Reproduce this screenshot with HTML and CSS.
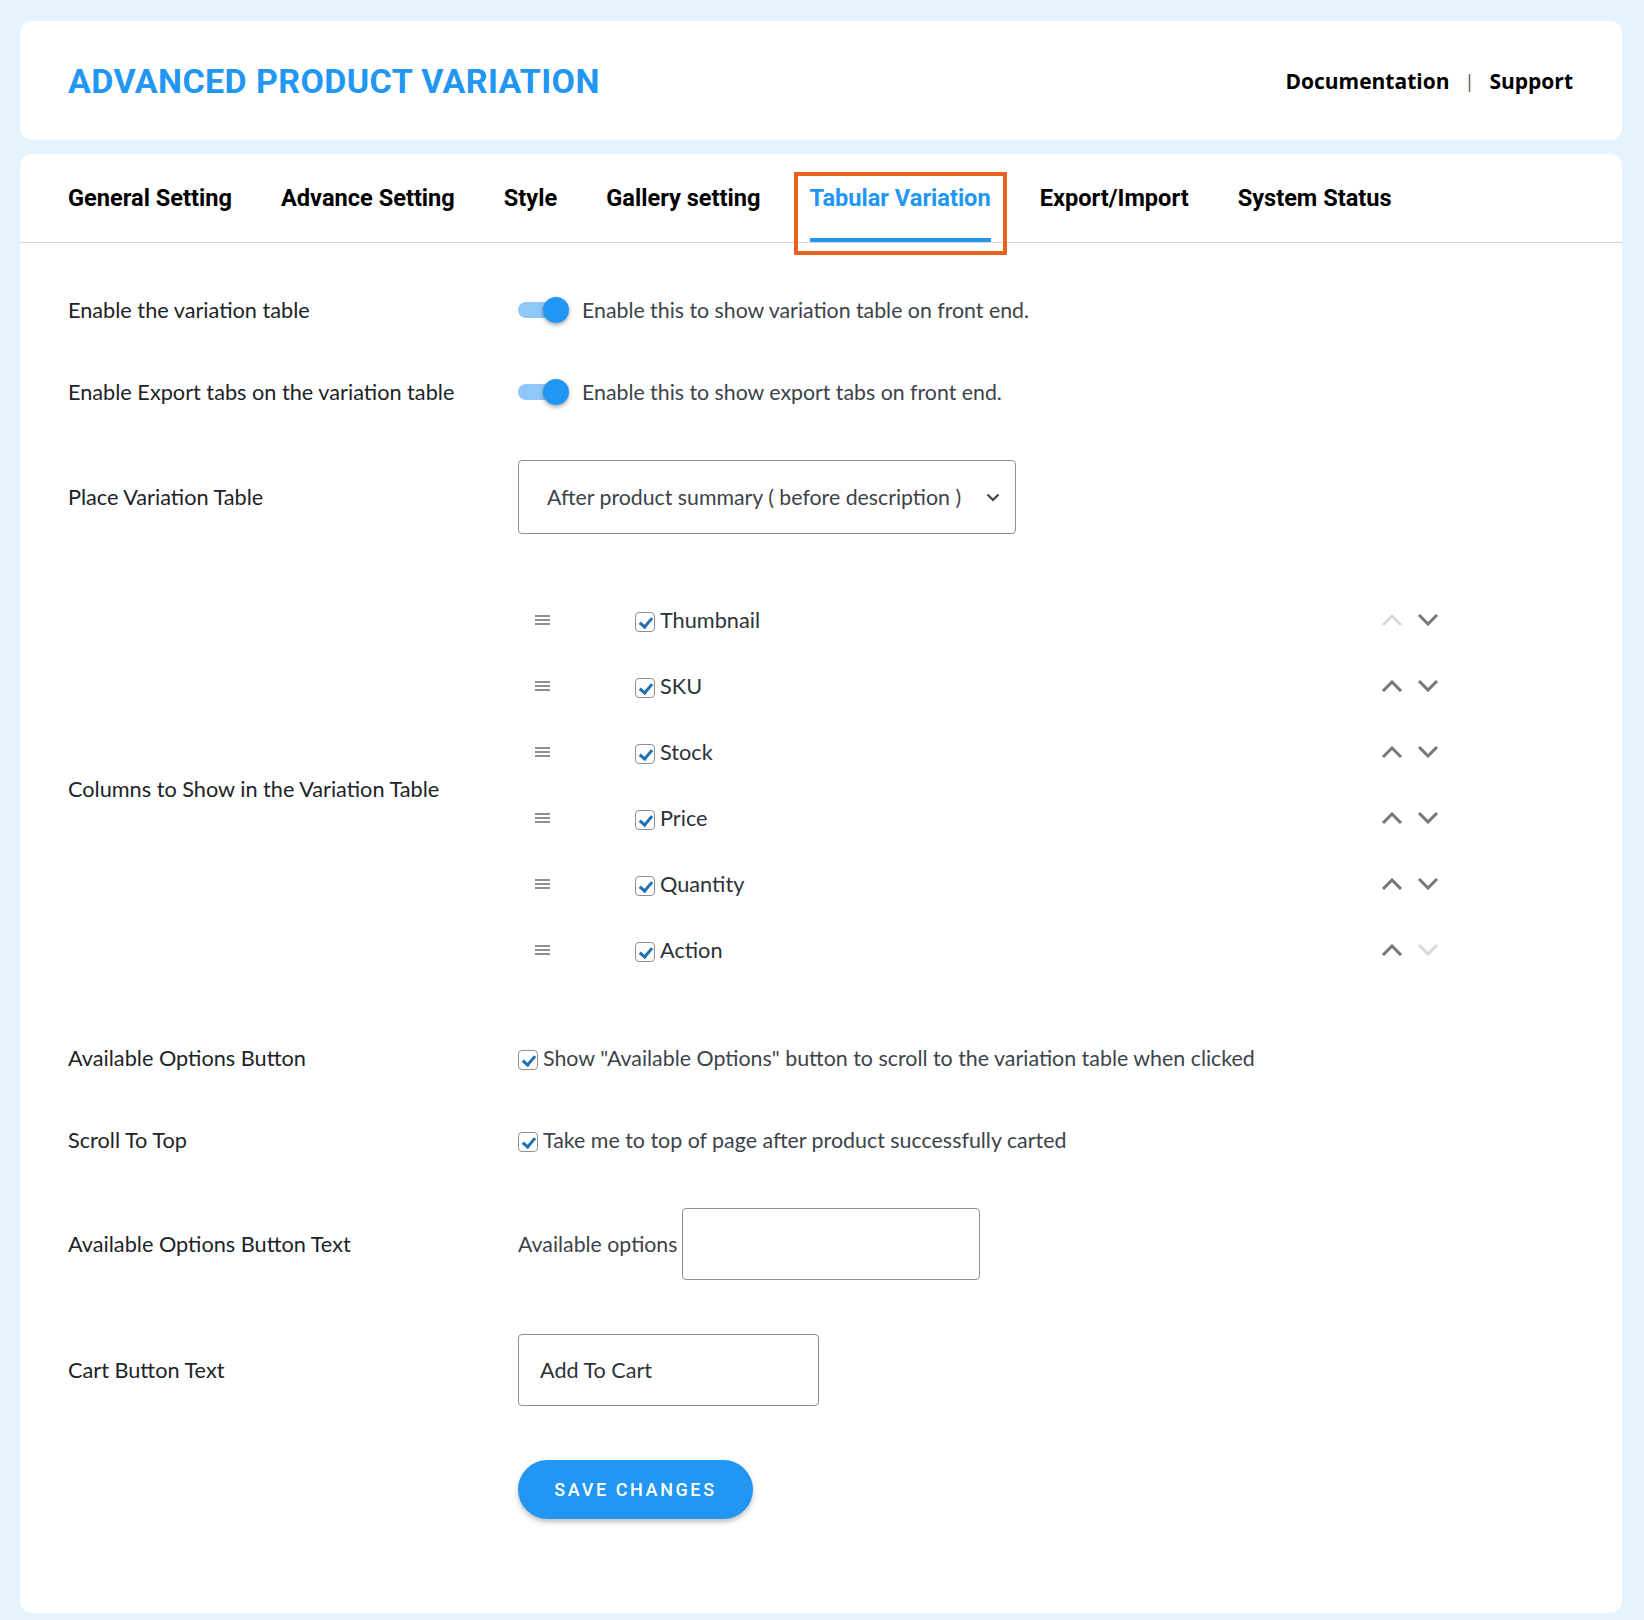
FILE: index.html
```html
<!DOCTYPE html>
<html lang="en">
<head>
    <meta charset="UTF-8">
    <meta name="viewport" content="width=device-width, initial-scale=1.0">
    <title>Advanced Product Variation</title>
    <link rel="stylesheet" href="styles.css">
</head>
<body>
    <div class="page">
        <header class="card topbar">
            <h1 class="brand">ADVANCED PRODUCT VARIATION</h1>
            <nav class="links">
                <a href="#">Documentation</a>
                <span class="sep">|</span>
                <a href="#">Support</a>
            </nav>
        </header>

        <main class="card settings">
            <nav class="tabs">
                <a class="tab" href="#">General Setting</a>
                <a class="tab" href="#">Advance Setting</a>
                <a class="tab" href="#">Style</a>
                <a class="tab" href="#">Gallery setting</a>
                <a class="tab active" href="#">Tabular Variation</a>
                <a class="tab" href="#">Export/Import</a>
                <a class="tab" href="#">System Status</a>
            </nav>

            <form class="form" onsubmit="return false">
                <div class="label">Enable the variation table</div>
                <div class="field">
                    <label class="switch"><input type="checkbox" checked><span class="track"></span></label>
                    <span class="desc">Enable this to show variation table on front end.</span>
                </div>

                <div class="label">Enable Export tabs on the variation table</div>
                <div class="field">
                    <label class="switch"><input type="checkbox" checked><span class="track"></span></label>
                    <span class="desc">Enable this to show export tabs on front end.</span>
                </div>

                <div class="label">Place Variation Table</div>
                <div class="field">
                    <div class="select">
                        <span>After product summary ( before description )</span>
                        <svg class="caret" width="14" height="9" viewBox="0 0 14 9"><path d="M1.5 1.5l5.5 5.5 5.5-5.5" fill="none" stroke="#3c434a" stroke-width="2.2"/></svg>
                    </div>
                </div>

                <div class="label">Columns to Show in the Variation Table</div>
                <div class="field">
                    <ul class="columns">
                        <li class="column">
                            <span class="handle"></span>
                            <label class="check"><span class="box"></span>Thumbnail</label>
                            <span class="order">
                                <svg class="arrow off" viewBox="0 0 22 12"><path d="M2 11L11 2l9 9"/></svg>
                                <svg class="arrow" viewBox="0 0 22 12"><path d="M2 1l9 9 9-9"/></svg>
                            </span>
                        </li>
                        <li class="column">
                            <span class="handle"></span>
                            <label class="check"><span class="box"></span>SKU</label>
                            <span class="order">
                                <svg class="arrow" viewBox="0 0 22 12"><path d="M2 11L11 2l9 9"/></svg>
                                <svg class="arrow" viewBox="0 0 22 12"><path d="M2 1l9 9 9-9"/></svg>
                            </span>
                        </li>
                        <li class="column">
                            <span class="handle"></span>
                            <label class="check"><span class="box"></span>Stock</label>
                            <span class="order">
                                <svg class="arrow" viewBox="0 0 22 12"><path d="M2 11L11 2l9 9"/></svg>
                                <svg class="arrow" viewBox="0 0 22 12"><path d="M2 1l9 9 9-9"/></svg>
                            </span>
                        </li>
                        <li class="column">
                            <span class="handle"></span>
                            <label class="check"><span class="box"></span>Price</label>
                            <span class="order">
                                <svg class="arrow" viewBox="0 0 22 12"><path d="M2 11L11 2l9 9"/></svg>
                                <svg class="arrow" viewBox="0 0 22 12"><path d="M2 1l9 9 9-9"/></svg>
                            </span>
                        </li>
                        <li class="column">
                            <span class="handle"></span>
                            <label class="check"><span class="box"></span>Quantity</label>
                            <span class="order">
                                <svg class="arrow" viewBox="0 0 22 12"><path d="M2 11L11 2l9 9"/></svg>
                                <svg class="arrow" viewBox="0 0 22 12"><path d="M2 1l9 9 9-9"/></svg>
                            </span>
                        </li>
                        <li class="column">
                            <span class="handle"></span>
                            <label class="check"><span class="box"></span>Action</label>
                            <span class="order">
                                <svg class="arrow" viewBox="0 0 22 12"><path d="M2 11L11 2l9 9"/></svg>
                                <svg class="arrow off" viewBox="0 0 22 12"><path d="M2 1l9 9 9-9"/></svg>
                            </span>
                        </li>
                    </ul>
                </div>

                <div class="label">Available Options Button</div>
                <div class="field">
                    <label class="check desc"><span class="box"></span>Show "Available Options" button to scroll to the variation table when clicked</label>
                </div>

                <div class="label">Scroll To Top</div>
                <div class="field">
                    <label class="check desc"><span class="box"></span>Take me to top of page after product successfully carted</label>
                </div>

                <div class="label">Available Options Button Text</div>
                <div class="field">
                    <span class="desc">Available options</span>
                    <input class="text short" type="text">
                </div>

                <div class="label">Cart Button Text</div>
                <div class="field">
                    <input class="text" type="text" value="Add To Cart">
                </div>

                <div class="label"></div>
                <div class="field">
                    <button class="save" type="submit">SAVE CHANGES</button>
                </div>
            </form>
        </main>
    </div>
</body>
</html>
```

FILE: styles.css
```css
/* page */
body {
    margin: 0;
    background-color: #e5f3fe;
    font-family: "Lato", "Noto Sans", sans-serif;
    color: #1d2327;
}

.page {
    padding: 21px 22px 7px 20px;
    display: flex;
    flex-direction: column;
    gap: 14px;
}

.card {
    background-color: white;
    border-radius: 12px;
}

/* header */
.topbar {
    height: 119px;
    padding: 0 49px 0 48px;
    display: flex;
    align-items: center;
    justify-content: space-between;
}

.brand {
    margin: 0;
    font-family: "Roboto", sans-serif;
    font-weight: 700;
    font-size: 34px;
    letter-spacing: 0.4px;
    color: #2196f3;
}

.links {
    display: flex;
    align-items: center;
    gap: 15px;
    font-family: "Open Sans", sans-serif;
    font-size: 21px;
    font-weight: 700;
}

.links a {
    color: #000;
    text-decoration: none;
}

.links .sep {
    font-weight: 400;
    color: #555;
    font-size: 18px;
}

/* tabs */
.settings {
    height: 1459px;
    box-sizing: border-box;
}

.tabs {
    display: flex;
    gap: 49px;
    padding: 0 48px;
    height: 89px;
    border-bottom: 1px solid #d6d6d6;
    box-sizing: border-box;
}

.tab {
    position: relative;
    display: flex;
    align-items: center;
    padding-top: 4px;
    height: 88px;
    box-sizing: border-box;
    border-bottom: 4px solid transparent;
    font-family: "Roboto", sans-serif;
    font-weight: 700;
    font-size: 23.6px;
    color: #000;
    text-decoration: none;
}

.tab.active {
    color: #2196f3;
    border-bottom-color: #2196f3;
}

/* highlight box drawn around the active tab */
.tab.active::after {
    content: "";
    position: absolute;
    top: 18px;
    bottom: -17px;
    left: -16px;
    right: -16px;
    border: 4px solid #e8611f;
}

/* form */
.form {
    display: grid;
    grid-template-columns: 450px 1fr;
    row-gap: 54px;
    align-items: center;
    padding: 53px 48px 0;
}

.label {
    font-size: 21.7px;
    color: #1d2327;
}

.field {
    display: flex;
    align-items: center;
    min-height: 28px;
}

.desc {
    font-size: 21.3px;
    color: #3c434a;
}

/* toggle */
.switch {
    position: relative;
    width: 51px;
    height: 26px;
    margin-right: 13px;
    flex-shrink: 0;
}

.switch input {
    display: none;
}

.switch .track {
    position: absolute;
    left: 0;
    top: 5px;
    width: 44px;
    height: 16px;
    border-radius: 8px;
    background-color: #8fc8f8;
}

.switch .track::after {
    content: "";
    position: absolute;
    right: -7px;
    top: -5px;
    width: 26px;
    height: 26px;
    border-radius: 50%;
    background-color: #2196f3;
    box-shadow: 0 2px 4px rgba(0, 0, 0, 0.35);
}

/* select */
.select {
    width: 498px;
    height: 74px;
    box-sizing: border-box;
    border: 1px solid #8c8f94;
    border-radius: 4px;
    padding: 0 15px 0 28px;
    display: flex;
    align-items: center;
    justify-content: space-between;
    font-size: 21.3px;
    color: #3c434a;
}

/* sortable columns */
.columns {
    list-style: none;
    margin: 0;
    padding: 0 0 6px;
    width: 921px;
}

.column {
    height: 66px;
    display: flex;
    align-items: center;
    margin-top: -1px;
    margin-bottom: 1px;
}

.handle {
    width: 15px;
    height: 10px;
    margin: 0 85px 0 17px;
    border-top: 2px solid #8c8f94;
    border-bottom: 2px solid #8c8f94;
    box-sizing: border-box;
    position: relative;
}

.handle::after {
    content: "";
    position: absolute;
    left: 0;
    right: 0;
    top: 2px;
    height: 2px;
    background-color: #8c8f94;
}

.check {
    display: flex;
    align-items: center;
    gap: 5px;
    font-size: 21.7px;
    color: #2c3338;
}

.check.desc {
    font-size: 21.4px;
    color: #3c434a;
}

.box {
    width: 20px;
    height: 20px;
    box-sizing: border-box;
    border: 1px solid #8c8f94;
    border-radius: 4px;
    position: relative;
    flex-shrink: 0;
    margin-top: 3px;
}

.box::after {
    content: "";
    position: absolute;
    left: 6px;
    top: 2px;
    width: 5px;
    height: 10px;
    border-right: 3px solid #2271b1;
    border-bottom: 3px solid #2271b1;
    transform: rotate(40deg);
}

.order {
    margin-left: auto;
    display: flex;
    align-items: center;
    gap: 14px;
}

.arrow {
    width: 22px;
    height: 12px;
    fill: none;
    stroke: #73787c;
    stroke-width: 3;
}

.arrow.off {
    stroke: #d9d9d9;
}

/* inputs */
.text {
    width: 301px;
    height: 72px;
    box-sizing: border-box;
    border: 1px solid #8c8f94;
    border-radius: 4px;
    padding: 0 21px;
    font-family: inherit;
    font-size: 21.6px;
    color: #2c3338;
}

.text.short {
    width: 298px;
    margin-left: 5px;
}

.save {
    width: 235px;
    height: 59px;
    border: none;
    border-radius: 30px;
    background-color: #2196f3;
    color: white;
    font-family: "Roboto", sans-serif;
    font-weight: 500;
    font-size: 18px;
    letter-spacing: 2.6px;
    box-shadow: 0 3px 5px rgba(0, 0, 0, 0.25);
    cursor: pointer;
}
```
